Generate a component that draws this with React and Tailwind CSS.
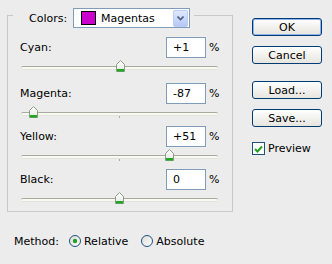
import React from "react";

const rows = [
  { label: "Cyan:", value: "+1", v: 1, mt: "mt-[9px]" },
  { label: "Magenta:", value: "-87", v: -87, mt: "mt-[11px]" },
  { label: "Yellow:", value: "+51", v: 51, mt: "mt-[8px]" },
  { label: "Black:", value: "0", v: 0, mt: "mt-[8px]" },
];

function Thumb() {
  return (
    <svg width="9" height="12" viewBox="0 0 9 12" className="block">
      <defs>
        <linearGradient id="tg" x1="0" y1="0" x2="0" y2="1">
          <stop offset="0" stopColor="#ffffff" />
          <stop offset="1" stopColor="#e4e8e0" />
        </linearGradient>
      </defs>
      <path d="M0.5 11.5 V4.5 L4.5 0.5 L8.5 4.5 V11.5 Z" fill="url(#tg)" stroke="#8c9a8c" />
      <rect x="1" y="9" width="7" height="2.5" fill="#22a722" />
    </svg>
  );
}

function Slider({ v }) {
  // track spans 197px, center at 98.5
  const left = 98.5 + v * 0.985 - 4.5;
  return (
    <div className="relative mt-[2px] ml-[13px] h-[12px] w-[197px]">
      <div className="absolute left-0 right-0 top-[6px] h-[4px] rounded-full border-t border-[#a9a99d] border-b border-b-[#e2e2da] bg-[#f9f9f4]" />
      <div className="absolute left-[98px] top-[10px] h-[2px] w-px bg-[#a9a99d]" />
      <div className="absolute top-0" style={{ left }}>
        <Thumb />
      </div>
    </div>
  );
}

function Row({ label, value, v, mt }) {
  return (
    <div className={mt}>
      <div className="flex h-[21px] items-center pl-[12px]">
        <div className="w-[146px]">{label}</div>
        <div className="flex h-[21px] w-[40px] items-center border border-[#7f9db9] bg-white pl-[6px]">
          {value}
        </div>
        <div className="ml-[3px]">%</div>
      </div>
      <Slider v={v} />
    </div>
  );
}

function Button({ children, primary, className }) {
  return (
    <div
      className={
        "flex h-[18px] w-[70px] items-center justify-center rounded-[3px] border border-[#003c74] bg-gradient-to-b from-white to-[#e6e5de] " +
        (primary ? "shadow-[inset_0_0_0_1px_#8fb2ec] " : "") +
        className
      }
    >
      {children}
    </div>
  );
}

function Radio({ checked }) {
  return (
    <svg width="12" height="12" viewBox="0 0 12 12" className="block">
      <defs>
        <linearGradient id="rg" x1="0" y1="0" x2="1" y2="1">
          <stop offset="0" stopColor="#dcdcd6" />
          <stop offset="1" stopColor="#ffffff" />
        </linearGradient>
      </defs>
      <circle cx="6" cy="6" r="5.5" fill="url(#rg)" stroke="#1c5180" />
      {checked && <circle cx="6" cy="6" r="2.2" fill="#21a121" />}
    </svg>
  );
}

export default function App() {
  return (
    <div className="flex h-[264px] w-[332px] bg-[#ececec] font-['DejaVu_Sans','Liberation_Sans',sans-serif] text-[11px] leading-none text-black">
      <div className="ml-[7px] w-[226px]">
        <div className="mt-[15px] h-[197px] border border-[#c8c8c4]">
          <div className="-mt-[8px] ml-[5px] flex h-[20px] w-[181px] items-center bg-[#ececec] pl-[16px]">
            <div className="w-[44px]">Colors:</div>
            <div className="flex h-[20px] w-[117px] items-center border border-[#7f9db9] bg-white pl-[7px]">
              <div className="h-[14px] w-[15px] border border-black bg-[#cc00cc]" />
              <div className="ml-[5px]">Magentas</div>
              <div className="ml-auto mr-[1px] flex h-[17px] w-[15px] items-center justify-center rounded-[2px] border border-[#b9cdf5] bg-gradient-to-b from-[#dfe8fd] to-[#b5c8f5]">
                <svg width="7" height="5" viewBox="0 0 7 5">
                  <path d="M0.5 0.5 L3.5 3.5 L6.5 0.5" fill="none" stroke="#4d6185" strokeWidth="1.6" />
                </svg>
              </div>
            </div>
          </div>
          {rows.map((r) => (
            <Row key={r.label} {...r} />
          ))}
        </div>
        <div className="mt-[22px] flex h-[14px] items-center pl-[7px]">
          <div>Method:</div>
          <div className="ml-[10px] flex items-center">
            <Radio checked />
            <span className="ml-[3px]">Relative</span>
          </div>
          <div className="ml-[13px] flex items-center">
            <Radio />
            <span className="ml-[3px]">Absolute</span>
          </div>
        </div>
      </div>
      <div className="ml-[19px] mt-[18px] flex flex-col">
        <Button primary>OK</Button>
        <Button className="mt-[10px]">Cancel</Button>
        <Button className="mt-[17px]">Load...</Button>
        <Button className="mt-[10px]">Save...</Button>
        <div className="mt-[15px] flex items-center">
          <div className="flex h-[13px] w-[13px] items-center justify-center border border-[#1c5180] bg-white">
            <svg width="9" height="8" viewBox="0 0 9 8">
              <path d="M1 4 L3.5 6.5 L8 1.5" fill="none" stroke="#21a121" strokeWidth="2" />
            </svg>
          </div>
          <span className="ml-[3px]">Preview</span>
        </div>
      </div>
    </div>
  );
}
